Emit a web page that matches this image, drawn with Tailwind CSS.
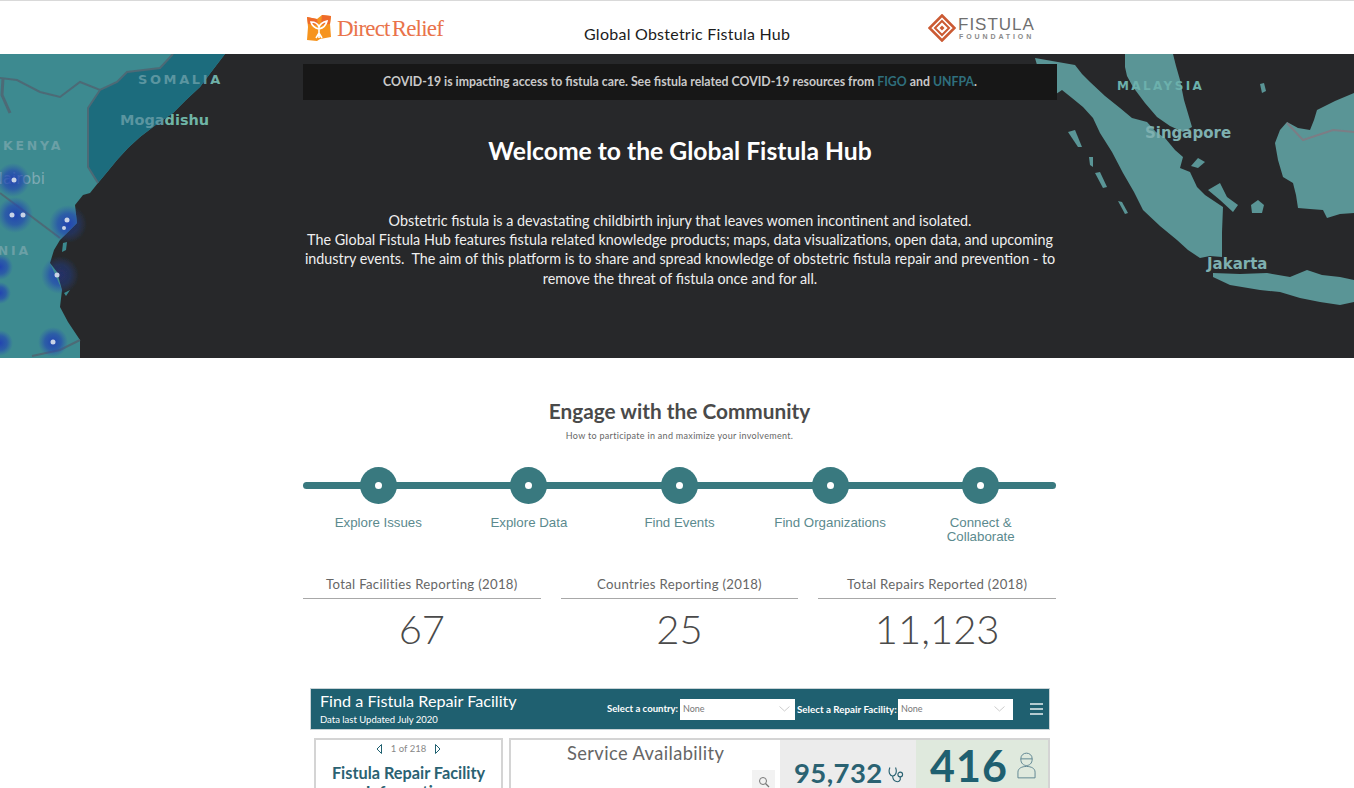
<!DOCTYPE html>
<html lang="en">
<head>
  <meta charset="UTF-8">
  <meta name="viewport" content="width=device-width, initial-scale=1">
  <title>Global Obstetric Fistula Hub</title>
  <script src="https://cdn.jsdelivr.net/npm/@tailwindcss/browser@4"></script>
</head>
<body class="bg-white h-[788px] overflow-hidden font-['Lato',sans-serif] text-[#4a4a4a]">

  <!-- top bar -->
  <header class="h-[54px] border-t border-[#d9d9d9] bg-white">
    <div class="flex items-start ml-[303px] w-[754px] relative">
      <div class="flex items-center mt-[13px] ml-[3px] w-[277px]">
        <svg width="26" height="28" viewBox="0 0 26 28">
          <path d="M1 3 L11 5 L16 1 L25 2 L24 10 L25 23 L14 25 L11 27 L1 26 L2 13 Z" fill="#f6941e"/>
          <path d="M1 3 L11 5 L12 11 L2 10 Z" fill="#ee6a2c"/>
          <path d="M16 1 L25 2 L24 10 L15 11 Z" fill="#ee6a2c"/>
          <path d="M13 24 L13 13 M13 15 C9 14 6 12 5 8 C9 8 12 10 13 13 C14 10 17 8 21 7 C20 12 17 14 13 15 M10 24 L13 19 L16 24" fill="none" stroke="#fff" stroke-width="1.6"/>
        </svg>
        <span class="ml-[5px] font-['Liberation_Serif',serif] text-[23px] leading-none tracking-[-0.8px] text-[#e9734a] whitespace-nowrap">Direct<span class="ml-[-3px]"> </span>Relief</span>
      </div>
      <h1 class="absolute left-[281px] top-[23px] text-[16px] leading-[20px] tracking-[0.25px] text-[#1c1c1c]">Global Obstetric Fistula Hub</h1>
      <div class="absolute left-[625px] top-[13px] flex items-center">
        <svg width="28" height="28" viewBox="0 0 28 28">
          <path d="M14 1.5 L26.5 14 L14 26.5 L1.5 14 Z" fill="none" stroke="#cb5a33" stroke-width="2.6"/>
          <path d="M14 7 L21 14 L14 21 L7 14 Z" fill="none" stroke="#cb5a33" stroke-width="2"/>
          <path d="M14 11.5 L16.5 14 L14 16.5 L11.5 14 Z" fill="#cb5a33"/>
        </svg>
        <div class="ml-[2px] flex flex-col">
          <span class="font-['Liberation_Sans',sans-serif] text-[17px] leading-[17px] tracking-[1px] text-[#6f6f6f]">FISTULA</span>
          <span class="font-['Liberation_Sans',sans-serif] font-bold text-[7px] leading-[9px] tracking-[2.9px] text-[#8a8a8a] mt-[-1px] ml-[1px]">FOUNDATION</span>
        </div>
      </div>
    </div>
  </header>

  <!-- hero with map behind it -->
  <section class="relative h-[304px] bg-[#27282a] overflow-hidden">
    <svg class="absolute inset-0" width="1354" height="304" viewBox="0 54 1354 304">
      <defs>
        <radialGradient id="heat">
          <stop offset="0" stop-color="#1f3cb4" stop-opacity="0.9"/>
          <stop offset="0.55" stop-color="#2346b2" stop-opacity="0.65"/>
          <stop offset="1" stop-color="#2a55b0" stop-opacity="0"/>
        </radialGradient>
        <clipPath id="africa">
          <path d="M0 54 L225 54 L200 87 L173 113 L140 137 L117 160 L98 183 L90 193 L75 205 L77 223 L60 240 L50 263 L62 290 L60 307 L80 340 L80 358 L0 358 Z"/>
        </clipPath>
        <filter id="soft"><feGaussianBlur stdDeviation="0.6"/></filter>
      </defs>

      <g filter="url(#soft)">
        <!-- heat spilling off the coast -->
        <circle cx="68" cy="224" r="19" fill="url(#heat)" opacity="0.5"/>
        <circle cx="60" cy="275" r="19" fill="url(#heat)" opacity="0.5"/>

        <!-- east africa -->
        <path d="M0 54 L225 54 L212 71 L200 87 L186 100 L173 113 L157 124 L140 137 L128 148 L117 160 L108 171 L98 183 L90 193 L83 195 L75 205 L77 223 L68 232 L60 240 L54 250 L50 263 L57 272 L62 290 L60 307 L68 322 L80 340 L80 358 L0 358 Z" fill="#3c8a90"/>
        <path d="M173 54 L225 54 L212 71 L200 87 L186 100 L173 113 L157 124 L140 137 L128 148 L117 160 L108 171 L98 183 L88 167 L88 108 L100 90 L117 82 L127 72 L160 68 Z" fill="#1f6c7d"/>
        <g fill="none" stroke="#4d6a76" stroke-width="2">
          <path d="M0 78 L17 80 L40 92 L60 97 L80 82 L100 90 L117 82 L127 72 L160 68 L173 54"/>
          <path d="M100 90 L88 108 L88 167 L98 183"/>
          <path d="M3 78 L2 95 L10 113" stroke-width="3"/>
          <path d="M0 193 L60 238"/>
          <path d="M32 356 L60 350 L80 340"/>
        </g>
      </g>
      <g font-family="'DejaVu Sans',sans-serif" font-weight="700" fill="#5b95a0">
        <text x="138" y="84" font-size="13" letter-spacing="2.6">SOMALI<tspan fill="#6fb0a8">A</tspan></text>
        <text x="120" y="125" font-size="14.5">Moga<tspan fill="#6fb5a6">dishu</tspan></text>
        <text x="3" y="150" font-size="12.5" letter-spacing="2.8" fill="#6ba0a6">KENYA</text>
        <text x="45" y="184" font-size="15" font-weight="400" text-anchor="end" fill="#7eaab4">Nairobi</text>
        <text x="31" y="255" font-size="12.5" letter-spacing="2.8" text-anchor="end" fill="#6ba0a6">TANZANIA</text>
      </g>
      <g clip-path="url(#africa)">
        <circle cx="13" cy="180" r="17" fill="url(#heat)"/>
        <circle cx="15" cy="215" r="18" fill="url(#heat)"/>
        <circle cx="68" cy="224" r="19" fill="url(#heat)"/>
        <circle cx="60" cy="275" r="19" fill="url(#heat)"/>
        <circle cx="53" cy="342" r="15" fill="url(#heat)"/>
        <circle cx="0" cy="267" r="13" fill="url(#heat)"/>
        <circle cx="0" cy="293" r="11" fill="url(#heat)"/>
        <circle cx="0" cy="343" r="13" fill="url(#heat)"/>
      </g>
      <path d="M63 243 L67 242 L66 250 L62 252 Z M64 293 L70 290 L66 296 Z" fill="#3c8a90"/>
      <g fill="#c9d3e6">
        <circle cx="14" cy="180" r="2.5"/><circle cx="12" cy="215" r="2.5"/><circle cx="23" cy="215" r="2.5"/>
        <circle cx="67" cy="220" r="2.5"/><circle cx="64" cy="228" r="2"/><circle cx="57" cy="275" r="2.5"/><circle cx="53" cy="342" r="2.5"/>
      </g>

      <!-- sumatra, malaya, borneo, java -->
      <g fill="#5a9596" filter="url(#soft)">
        <path d="M1035 58 L1075 65 L1082 74 L1090 82 L1105 96 L1120 108 L1132 118 L1147 122 L1156 132 L1165 138 L1175 150 L1183 157 L1180 168 L1190 172 L1197 187 L1205 195 L1223 207 L1222 232 L1222 257 L1210 256 L1200 258 L1188 250 L1177 240 L1160 226 L1143 210 L1134 192 L1123 173 L1112 152 L1100 133 L1093 118 L1083 107 L1072 98 L1062 90 L1047 100 Z"/>
        <path d="M1125 54 L1173 54 L1176 66 L1180 80 L1184 100 L1192 127 L1183 132 L1170 126 L1157 117 L1145 103 L1133 87 L1127 76 L1125 67 Z"/>
        <path d="M1354 93 L1335 101 L1317 110 L1314 120 L1310 130 L1298 128 L1287 122 L1280 130 L1275 143 L1278 160 L1283 177 L1293 183 L1296 195 L1298 208 L1310 209 L1323 210 L1327 218 L1340 214 L1354 213 Z"/>
        <path d="M1213 273 L1240 274 L1267 273 L1290 277 L1307 270 L1322 275 L1340 277 L1354 280 L1354 302 L1340 305 L1320 302 L1300 298 L1280 292 L1260 290 L1230 285 L1213 277 Z"/>
        <path d="M1208 190 L1220 183 L1227 197 L1238 205 L1233 212 L1220 200 Z"/>
        <path d="M1251 205 L1258 200 L1264 205 L1262 213 L1252 213 Z"/>
        <path d="M1068 132 L1075 130 L1082 147 L1078 147 Z"/>
        <path d="M1095 173 L1100 172 L1107 187 L1103 188 Z"/>
        <path d="M1118 201 L1122 202 L1128 213 L1125 214 Z"/>
        <path d="M1089 157 L1093 157 L1093 167 L1090 165 Z"/>
        <path d="M1260 84 L1264 83 L1266 91 L1262 93 Z"/>
        <path d="M1191 166 L1198 158 L1205 162 L1198 168 Z"/>
      </g>
      <path d="M1287 123 L1303 140 L1333 130 L1354 132" fill="none" stroke="#7b7d85" stroke-width="2" filter="url(#soft)"/>
      <g font-family="'DejaVu Sans',sans-serif" font-weight="700">
        <text x="1117" y="90" font-size="12" letter-spacing="2.4" fill="#6cb0ac">MALAYSIA</text>
        <text x="1145" y="138" font-size="15" fill="#7eb0b0">Singapore</text>
        <text x="1207" y="269" font-size="15" fill="#7eb0b0">Jakarta</text>
      </g>
    </svg>

    <div class="relative ml-[303px] w-[754px] pt-[10px] text-center">
      <p class="h-[36px] bg-[#171717] text-[#c9c9c9] text-[12.3px] font-bold leading-[36px]">COVID-19 is impacting access to fistula care. See fistula related COVID-19 resources from <a class="text-[#2f6f7d]">FIGO</a> and <a class="text-[#2f6f7d]">UNFPA</a>.</p>
      <h2 class="mt-[33px] text-white text-[24.7px] font-bold leading-[36px]">Welcome to the Global Fistula Hub</h2>
      <p class="mt-[42px] text-[#efefef] text-[14.35px] leading-[19.2px]">Obstetric fistula is a devastating childbirth injury that leaves women incontinent and isolated.<br>The Global Fistula Hub features fistula related knowledge products; maps, data visualizations, open data, and upcoming industry events.&nbsp; The aim of this platform is to share and spread knowledge of obstetric fistula repair and prevention - to remove the threat of fistula once and for all.</p>
    </div>
  </section>

  <!-- community -->
  <section class="ml-[303px] w-[753px] text-center">
    <h2 class="mt-[39px] text-[20.8px] font-bold leading-[28px] text-[#4a4a4a]">Engage with the Community</h2>
    <p class="mt-[5px] text-[9px] leading-[12px] tracking-[0.3px] text-[#666]">How to participate in and maximize your involvement.</p>

    <div class="relative mt-[25px]">
      <div class="absolute left-0 right-0 top-[15px] h-[7px] rounded-full bg-[#39797f]"></div>
      <div class="relative grid grid-cols-5">
        <div class="flex flex-col items-center">
          <div class="w-[37px] h-[37px] rounded-full bg-[#39797f] flex items-center justify-center"><div class="w-[7px] h-[7px] rounded-full bg-white"></div></div>
          <span class="mt-[12px] font-['Liberation_Sans',sans-serif] text-[13.3px] leading-[14px] text-[#5b8a8e]">Explore Issues</span>
        </div>
        <div class="flex flex-col items-center">
          <div class="w-[37px] h-[37px] rounded-full bg-[#39797f] flex items-center justify-center"><div class="w-[7px] h-[7px] rounded-full bg-white"></div></div>
          <span class="mt-[12px] font-['Liberation_Sans',sans-serif] text-[13.3px] leading-[14px] text-[#5b8a8e]">Explore Data</span>
        </div>
        <div class="flex flex-col items-center">
          <div class="w-[37px] h-[37px] rounded-full bg-[#39797f] flex items-center justify-center"><div class="w-[7px] h-[7px] rounded-full bg-white"></div></div>
          <span class="mt-[12px] font-['Liberation_Sans',sans-serif] text-[13.3px] leading-[14px] text-[#5b8a8e]">Find Events</span>
        </div>
        <div class="flex flex-col items-center">
          <div class="w-[37px] h-[37px] rounded-full bg-[#39797f] flex items-center justify-center"><div class="w-[7px] h-[7px] rounded-full bg-white"></div></div>
          <span class="mt-[12px] font-['Liberation_Sans',sans-serif] text-[13.3px] leading-[14px] text-[#5b8a8e]">Find Organizations</span>
        </div>
        <div class="flex flex-col items-center">
          <div class="w-[37px] h-[37px] rounded-full bg-[#39797f] flex items-center justify-center"><div class="w-[7px] h-[7px] rounded-full bg-white"></div></div>
          <span class="mt-[12px] font-['Liberation_Sans',sans-serif] text-[13.3px] leading-[14px] text-[#5b8a8e]">Connect &amp;<br>Collaborate</span>
        </div>
      </div>
    </div>

    <!-- stats -->
    <div class="grid grid-cols-3 gap-x-[20px] mt-[31px]">
      <div>
        <div class="h-[24px] border-b border-[#a8a8a8] text-[13.2px] leading-[19px] tracking-[0.3px] text-[#666]">Total Facilities Reporting (2018)</div>
        <div class="mt-[5px] text-[40px] font-light leading-[50px] text-[#4a4a4a]">67</div>
      </div>
      <div>
        <div class="h-[24px] border-b border-[#a8a8a8] text-[13.2px] leading-[19px] tracking-[0.3px] text-[#666]">Countries Reporting (2018)</div>
        <div class="mt-[5px] text-[40px] font-light leading-[50px] text-[#4a4a4a]">25</div>
      </div>
      <div>
        <div class="h-[24px] border-b border-[#a8a8a8] text-[13.2px] leading-[19px] tracking-[0.3px] text-[#666]">Total Repairs Reported (2018)</div>
        <div class="mt-[5px] text-[40px] font-light leading-[50px] text-[#4a4a4a]">11,123</div>
      </div>
    </div>
  </section>

  <!-- embedded dashboard -->
  <section class="ml-[310px] w-[740px] mt-[34px]">
    <div class="h-[42px] bg-[#1f6070] border border-[#c9d3d6] flex items-center text-white">
      <div class="ml-[9px] w-[287px]">
        <div class="text-[16.2px] leading-[22px] mt-[-2px]">Find a Fistula Repair Facility</div>
        <div class="text-[9.5px] leading-[12px] mt-[2px]">Data last Updated July 2020</div>
      </div>
      <span class="w-[72px] mt-[1px] text-[9.6px] font-bold whitespace-nowrap">Select a country:</span>
      <div class="ml-[1px] w-[115px] h-[21px] bg-white flex items-center justify-between px-[3px] text-[9px] text-[#777]">None
        <svg class="mr-[2px]" width="11" height="6" viewBox="0 0 11 6"><path d="M0.5 0.5 L5.5 5 L10.5 0.5" fill="none" stroke="#ccc"/></svg>
      </div>
      <span class="ml-[2px] mt-[1px] w-[100px] text-[9.8px] font-bold whitespace-nowrap">Select a Repair Facility:</span>
      <div class="ml-[1px] w-[115px] h-[21px] bg-white flex items-center justify-between px-[3px] text-[9px] text-[#777]">None
        <svg class="mr-[5px]" width="11" height="6" viewBox="0 0 11 6"><path d="M0.5 0.5 L5.5 5 L10.5 0.5" fill="none" stroke="#ccc"/></svg>
      </div>
      <svg class="ml-[17px]" width="13" height="12" viewBox="0 0 13 12"><path d="M0 1 H13 M0 6 H13 M0 11 H13" stroke="#e6eef0" stroke-width="1.3"/></svg>
    </div>

    <div class="flex mt-[8px] h-[60px] overflow-hidden">
      <div class="ml-[4px] w-[189px] h-[80px] border-2 border-[#d4d4d4] text-center">
        <div class="flex items-center justify-center mt-[3px] text-[9.5px] leading-[12px] text-[#888]">
          <svg width="7" height="10" viewBox="0 0 7 10"><path d="M5.5 0.5 L1 5 L5.5 9.5 Z" fill="none" stroke="#1f6070"/></svg>
          <span class="mx-[8px]">1 of 218</span>
          <svg width="7" height="10" viewBox="0 0 7 10"><path d="M1.5 0.5 L6 5 L1.5 9.5 Z" fill="none" stroke="#1f6070"/></svg>
        </div>
        <div class="mt-[8px] text-[16.3px] font-bold leading-[19px] text-[#2a6272]">Fistula Repair Facility<br>Information</div>
      </div>
      <div class="relative ml-[6px] w-[271px] h-[80px] border-2 border-r-0 border-[#d4d4d4]">
        <div class="ml-[56px] text-[18.3px] leading-[26px] tracking-[0.4px] text-[#666]">Service Availability</div>
        <div class="absolute left-[241px] top-[30px] w-[23px] h-[23px] bg-[#f2f2f2] flex items-center justify-center">
          <svg width="12" height="12" viewBox="0 0 12 12"><circle cx="5" cy="5" r="3.5" fill="none" stroke="#777"/><path d="M7.5 7.5 L11 11" stroke="#777" stroke-width="1.2"/></svg>
        </div>
      </div>
      <div class="w-[136px] h-[80px] bg-[#ececec] border-t-2 border-[#d4d4d4] flex items-start pl-[14px] pt-[16px]">
        <span class="text-[27.5px] font-bold leading-[34px] tracking-[0.4px] text-[#2a6272]">95,732</span>
        <svg class="ml-[5px] mt-[10px]" width="16" height="18" viewBox="0 0 17 18" fill="none" stroke="#2a6272" stroke-width="1.2">
          <path d="M2 1 C0 6 2 10 5 10 C8 10 10 6 8 1"/>
          <path d="M5 10 C5 16 11 18 13 14 L13 11"/>
          <circle cx="13" cy="8.5" r="2.5"/>
        </svg>
      </div>
      <div class="w-[134px] h-[80px] bg-[#dfe9dd] border-2 border-l-0 border-[#d4d4d4] flex items-start pl-[14px] pt-[1px]">
        <span class="text-[43px] font-bold leading-[50px] tracking-[1px] text-[#1f6070]">416</span>
        <svg class="ml-[9px] mt-[11px]" width="19" height="27" viewBox="0 0 20 28" fill="none" stroke="#5d8490" stroke-width="1">
          <path d="M4 7 C4 3 7 1 10 1 C13 1 16 3 16 7 Z"/>
          <path d="M4 7 C4 12 7 14 10 14 C13 14 16 12 16 7"/>
          <path d="M1 27 L1 21 C1 17 5 15 10 15 C15 15 19 17 19 21 L19 27 Z"/>
        </svg>
      </div>
    </div>
  </section>
</body>
</html>
